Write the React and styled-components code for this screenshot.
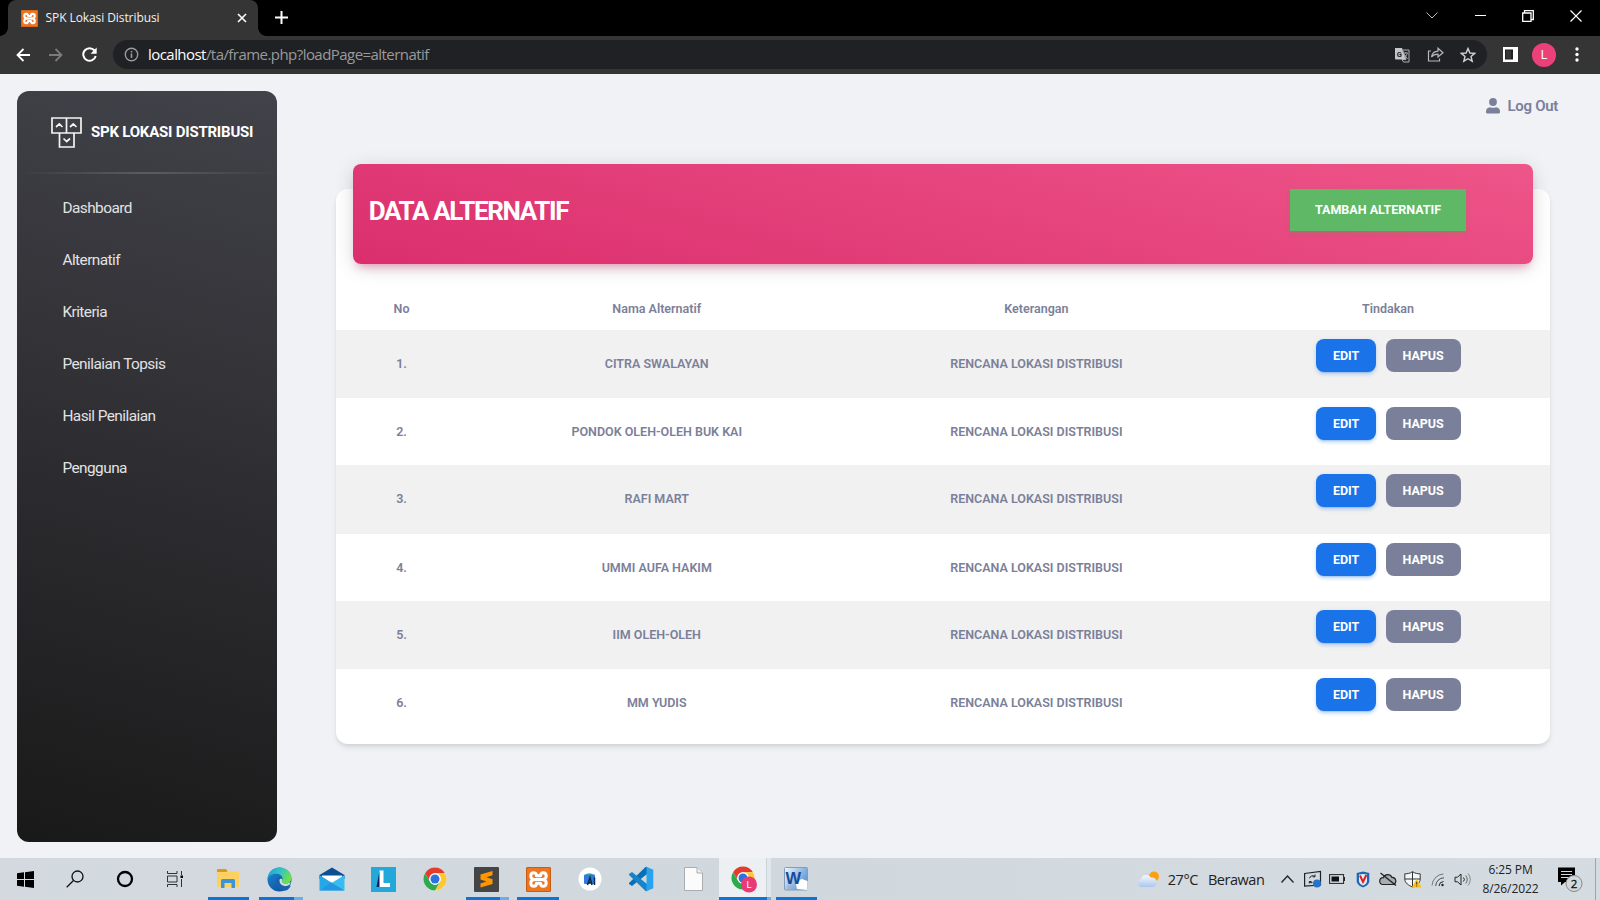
import React from "react";
import styled, { createGlobalStyle, css } from "styled-components";

const Global = createGlobalStyle`
  * { box-sizing: border-box; }
  html, body { margin: 0; padding: 0; }
  body { width: 1600px; height: 900px; overflow: hidden; font-family: Roboto, sans-serif; background: #f0f2f6; }
  svg { display: block; flex: none; }
`;

const ui = `"Open Sans", "Noto Sans", sans-serif`;

const Screen = styled.div`
  display: flex;
  flex-direction: column;
  width: 1600px;
  height: 900px;
`;

/* Browser chrome */
const TabStrip = styled.div`
  display: flex;
  height: 36px;
  background: #000;
`;
const Tab = styled.div`
  position: relative;
  display: flex;
  align-items: center;
  width: 250px;
  height: 36px;
  margin-left: 8px;
  padding: 0 11.5px 0 13px;
  border-radius: 8px 8px 0 0;
  background: #353535;
  &::before, &::after {
    content: "";
    position: absolute;
    bottom: 0;
    width: 8px;
    height: 8px;
  }
  &::before { left: -8px; background: radial-gradient(circle at 0 0, #000 7.5px, #353535 8px); }
  &::after { right: -8px; background: radial-gradient(circle at 100% 0, #000 7.5px, #353535 8px); }
`;
const TabTitle = styled.span`
  flex: 1;
  margin: -1px 0 0 7.5px;
  font: 12px/18px ${ui};
  letter-spacing: -0.08px;
  color: #f1f1f1;
  white-space: nowrap;
`;
const NewTab = styled.div`
  display: flex;
  align-items: center;
  margin: -1px 0 0 17px;
`;
const WindowControls = styled.div`
  display: flex;
  align-items: center;
  margin-left: auto;
  height: 31px;
`;
const WindowButton = styled.div`
  display: flex;
  justify-content: center;
  width: 48px;
`;
const Toolbar = styled.div`
  display: flex;
  align-items: center;
  height: 38px;
  padding: 0 10px 1px 6px;
  background: #353535;
`;
const NavButton = styled.div`
  display: flex;
  justify-content: center;
  width: 33.5px;
`;
const AddressBar = styled.div`
  display: flex;
  align-items: center;
  width: 1374px;
  height: 29px;
  margin-left: 6.5px;
  padding: 0 2px 0 11px;
  border-radius: 15px;
  background: #202124;
`;
const Url = styled.div`
  flex: 1;
  margin: -2px 0 0 9px;
  font: 15px/20px ${ui};
  letter-spacing: -0.55px;
  color: #9a9a9b;
  white-space: nowrap;
  b { font-weight: 400; color: #fff; }
`;
const AddressAction = styled.div`
  display: flex;
  justify-content: center;
  width: 33.3px;
`;
const PanelIcon = styled.svg`
  margin: 0 15px 0 16px;
`;
const Avatar = styled.div`
  display: flex;
  align-items: center;
  justify-content: center;
  width: 24px;
  height: 24px;
  margin: 0 13.5px 0 -1px;
  border-radius: 50%;
  background: #ec407a;
  color: #fff;
  font: 12px/24px Roboto, sans-serif;
`;

/* Page */
const Page = styled.main`
  display: flex;
  height: 784px;
  padding: 17px 0 16px 17px;
  background: #f0f2f6;
`;
const Sidebar = styled.aside`
  width: 260px;
  height: 751px;
  border-radius: 12px;
  background: linear-gradient(195deg, #42424a, #191919);
`;
const Brand = styled.div`
  display: flex;
  align-items: center;
  height: 81px;
  padding: 1px 0 0 34px;
`;
const BrandName = styled.span`
  margin: -1px 0 0 9px;
  color: #fff;
  font: 700 15px/20px Roboto, sans-serif;
  letter-spacing: -0.22px;
  white-space: nowrap;
`;
const Divider = styled.div`
  height: 2px;
  background: linear-gradient(90deg, transparent, rgba(255, 255, 255, 0.16), transparent);
`;
const Menu = styled.nav`
  display: flex;
  flex-direction: column;
  padding: 7.6px 0 0 45.4px;
`;
const MenuItem = styled.a`
  height: 52px;
  color: #e2e2e4;
  font: 400 15.4px/52px Roboto, sans-serif;
  letter-spacing: -0.55px;
  white-space: nowrap;
`;
const Content = styled.section`
  display: flex;
  flex-direction: column;
  width: 1214px;
  margin-left: 59px;
`;
const LogOut = styled.a`
  display: flex;
  align-items: center;
  align-self: flex-end;
  gap: 7px;
  height: 20px;
  margin: 5px -8px 73px 0;
  color: #7b809a;
  font: 600 15px/21px Roboto, sans-serif;
  letter-spacing: -0.3px;
`;
const Card = styled.div`
  height: 555px;
  border-radius: 12px;
  background: #fff;
  box-shadow: 0 4px 6px -1px rgba(0, 0, 0, 0.1), 0 2px 4px -1px rgba(0, 0, 0, 0.06);
`;
const CardHeader = styled.header`
  display: flex;
  align-items: flex-start;
  justify-content: space-between;
  height: 100px;
  margin: -25px 17px 0 16.6px;
  padding: 25px 67px 0 16.2px;
  border-radius: 8px;
  background: linear-gradient(195deg, #ee5589, #db2f6d);
  box-shadow: 0 4px 20px rgba(0, 0, 0, 0.14), 0 7px 10px -5px rgba(233, 30, 99, 0.4);
`;
const Title = styled.h1`
  margin: 0;
  color: #fff;
  font: 700 26px/44px Roboto, sans-serif;
  letter-spacing: -1.35px;
`;
const AddButton = styled.button`
  width: 176px;
  height: 42px;
  padding: 0;
  border: 0;
  background: #5fb865;
  box-shadow: 0 3px 3px rgba(76, 175, 80, 0.15), 0 3px 1px -2px rgba(76, 175, 80, 0.2), 0 1px 5px rgba(76, 175, 80, 0.15);
  color: #fff;
  font: 700 12.5px/42px Roboto, sans-serif;
  letter-spacing: 0;
`;
const Row = styled.div`
  display: grid;
  grid-template-columns: 131px 379.5px 379.7px 323.8px;
  height: ${(p) => (p.$striped ? 68.4 : 67)}px;
  background: ${(p) => (p.$striped ? "#f1f1f1" : "transparent")};
  color: #7b809a;
  font: 600 12.5px/68px Roboto, sans-serif;
  text-align: center;
`;
const HeadRow = styled(Row)`
  height: 66px;
  line-height: 90px;
`;
const Actions = styled.div`
  display: flex;
  justify-content: center;
  gap: 9.5px;
  padding: 9px 0 0 0.6px;
`;
const ActionButton = styled.button`
  height: 33px;
  width: ${(p) => (p.$kind === "edit" ? 60 : 75)}px;
  padding: 0;
  border: 0;
  border-radius: 8px;
  color: #fff;
  font: 700 12.5px/33px Roboto, sans-serif;
  background: #7b809a;
  ${(p) => p.$kind === "edit" && css`
    background: #1a73e8;
    box-shadow: 0 3px 3px rgba(26, 115, 232, 0.15), 0 3px 1px -2px rgba(26, 115, 232, 0.2), 0 1px 5px rgba(26, 115, 232, 0.15);
  `}
`;

/* Taskbar */
const Taskbar = styled.footer`
  display: flex;
  height: 42px;
  background: linear-gradient(90deg, #d3d9df, #d0d8de 50%, #d5dce1);
`;
const SystemButton = styled.div`
  display: flex;
  align-items: center;
  justify-content: center;
  width: 50px;
  height: 42px;
`;
const Apps = styled.div`
  display: flex;
  margin-left: 2.5px;
`;
const AppButton = styled.div`
  position: relative;
  display: flex;
  align-items: center;
  justify-content: center;
  width: 51.65px;
  height: 42px;
  background: ${(p) => (p.$active ? "linear-gradient(90deg, #edf0f3 47px, #cbd2d8 47px, #cbd2d8 48px, #e2e7eb 48px)" : "transparent")};
`;
const Running = styled.i`
  position: absolute;
  bottom: 0;
  left: ${(p) => (p.$wide ? 0 : 5)}px;
  right: ${(p) => (p.$wide ? 0 : p.$multi ? 3 : 5)}px;
  height: 3px;
  background: ${(p) => {
    if (p.$wide) return "linear-gradient(90deg, #0b74d8 48px, #69afe8 48px)";
    return p.$multi ? "linear-gradient(90deg, #0b74d8 80%, #69afe8 80%)" : "#0b74d8";
  }};
`;
const Weather = styled.div`
  display: flex;
  align-items: center;
  margin-left: auto;
  width: 138.5px;
  font: 14.5px/20px ${ui};
  letter-spacing: -0.45px;
  color: #222;
  span { margin: 1px 0 0 8px; }
  span + span { margin-left: 10px; }
`;
const TrayIcon = styled.div`
  display: flex;
  align-items: center;
  justify-content: center;
  width: 25.1px;
  height: 42px;
`;
const Clock = styled.div`
  width: 69px;
  padding-top: 2px;
  color: #222;
  font: 12px/19px ${ui};
  letter-spacing: -0.1px;
  text-align: center;
  white-space: nowrap;
`;
const Notice = styled.div`
  display: flex;
  align-items: center;
  width: 51px;
  height: 42px;
  padding-left: 12px;
  border-right: 1px solid #9ea4a9;
  margin-right: 4px;
`;

/* Icons */
const Xampp = ({ s }) => (
  <svg width={s} height={s} viewBox="0 0 24 24">
    <rect width="24" height="24" rx="1.5" fill="#ee7623" />
    <rect x="0.5" y="0.5" width="23" height="23" rx="1.2" fill="none" stroke="#c75d13" />
    <g fill="none" stroke="#fff" strokeWidth="2.9" strokeLinecap="round" strokeLinejoin="round">
      <path d="M9.300 12H14.700M9.300 12c-3 0-4.700-1.300-4.700-3.400 0-2 1.300-3.100 2.900-3.100C9.500 5.500 10 7 10 8.500h4c0-1.500.5-3 2.500-3 1.600 0 2.900 1.100 2.900 3.100 0 2.100-1.700 3.400-4.700 3.400" />
      <path d="M9.300 12c-3 0-4.700 1.300-4.700 3.400 0 2 1.300 3.100 2.900 3.100 2 0 2.500-1.500 2.500-3h4c0 1.500.5 3 2.500 3 1.600 0 2.900-1.100 2.900-3.100 0-2.100-1.700-3.400-4.700-3.400" />
    </g>
  </svg>
);
const ChromeLogo = ({ s = 24 }) => (
  <svg width={s} height={s} viewBox="0 0 24 24">
    <circle cx="12" cy="12" r="11.500" fill="#fff" />
    <path d="M2.040 6.250A11.500 11.500 0 0 1 21.960 6.250H12A5.750 5.750 0 0 0 7.020 14.870Z" fill="#e33b2e" />
    <path d="M21.960 6.250A11.500 11.500 0 0 1 12 23.500L16.980 14.870A5.750 5.750 0 0 0 12 6.250Z" fill="#fcc934" />
    <path d="M12 23.500A11.500 11.500 0 0 1 2.040 6.250L7.020 14.870A5.750 5.750 0 0 0 16.980 14.870Z" fill="#2da94f" />
    <circle cx="12" cy="12" r="5.700" fill="#fff" />
    <circle cx="12" cy="12" r="4.500" fill="#2d70e0" />
  </svg>
);
const Line = ({ w, h = w, c = "#fff", sw = 1, d }) => (
  <svg width={w} height={h} viewBox={`0 0 ${w} ${h}`} fill="none" stroke={c} strokeWidth={sw}>
    <path d={d} />
  </svg>
);

const taskApps = [
  { id: "explorer", run: true, icon: (
    <svg width="24" height="22" viewBox="0 0 24 22">
      <path d="M1 2a1 1 0 0 1 1-1h8l2 2.500H22a1 1 0 0 1 1 1V19H1Z" fill="#fdd160" />
      <path d="M1 4V2a1 1 0 0 1 1-1h8l1.500 2-1 1Z" fill="#dd9a14" />
      <path d="M5 20V12.500a1.500 1.500 0 0 1 1.500-1.500h11a1.500 1.500 0 0 1 1.500 1.500V20H15.500V15h-7v5Z" fill="#3d93d8" />
    </svg>) },
  { id: "edge", run: true, multi: true, icon: (
    <svg width="25" height="25" viewBox="0 0 25 25">
      <defs>
        <linearGradient id="eg" x1="0" y1="0" x2="1" y2="0.400"><stop offset="0" stopColor="#1e9fdf" /><stop offset="0.550" stopColor="#34c3c5" /><stop offset="1" stopColor="#6bdf4f" /></linearGradient>
        <linearGradient id="eb" x1="0" y1="0" x2="0.700" y2="1"><stop offset="0" stopColor="#1b8bd6" /><stop offset="1" stopColor="#12509c" /></linearGradient>
      </defs>
      <circle cx="12.500" cy="12.500" r="12" fill="url(#eb)" />
      <path d="M.6 12C1 5.500 6 .500 12.500.500S24.500 5.300 24.500 11c0 3.700-3 5.500-5.700 5.500-2.600 0-4.300-.9-4.300-2 0-.8 1-1.200 1-3 0-2.600-2.700-4.700-6.500-4.700C4.500 6.800 1.500 9.300.6 12Z" fill="url(#eg)" />
      <path d="M14.500 11.200c-1 .6-2.300 1.500-2.300 3.600 0 3 3 5.300 6.500 5.300 1.800 0 3.500-.6 4.500-1.300.4-.3.6 0 .4.400-1 1.700-2.600 3.300-4.300 4.200-5 .5-10.300-3-10.300-8.600 0-2.600 1.500-4.600 3.200-5.300 1.500 0 2.500.7 2.300 1.700Z" fill="#1763ad" />
      <path d="M12.800 12c1.500-1 3 .3 2.200 1.600-.9 1.500.7 3 3.700 3 2.100 0 3.900-.6 5-1.800-.2 2.800-2.200 4.400-5 4.400-4 0-7.200-3.400-5.900-7.200Z" fill="#d3d9df" />
    </svg>) },
  { id: "mail", icon: (
    <svg width="26" height="24" viewBox="0 0 26 24">
      <path d="M.5 8 13 .500 25.500 8V12H.500Z" fill="#0d4f93" />
      <path d="M3 8.500H23V17H3Z" fill="#fff" />
      <path d="M.5 8 13 16 .500 23.500Z" fill="#27a7e8" />
      <path d="M25.500 8V23.500H.500Z" fill="#38bdf3" />
      <path d="M25.500 23.500 12 15.300.500 23.500Z" fill="#2398de" />
    </svg>) },
  { id: "l", icon: (
    <svg width="25" height="25" viewBox="0 0 25 25">
      <rect width="25" height="25" fill="#22a9d9" />
      <path d="M8.500 4 5.500 20H11V16Z" fill="#0c1f5c" />
      <path d="M8.500 3.500H12.500V16H19V20H8.500Z" fill="#fff" />
    </svg>) },
  { id: "chrome", icon: <ChromeLogo /> },
  { id: "sublime", run: true, multi: true, icon: (
    <svg width="25" height="25" viewBox="0 0 25 25">
      <rect width="25" height="25" rx="1" fill="#454545" />
      <path d="M18.500 4V8.300L12.500 10.300 18.500 12.200V17L6.500 20.500V16.500L12.500 14.500 6.500 12.500V7.500Z" fill="#ff9800" />
    </svg>) },
  { id: "xampp", run: true, icon: <Xampp s={25} /> },
  { id: "studio", icon: (
    <svg width="24" height="24" viewBox="0 0 24 24">
      <circle cx="12" cy="12" r="11.500" fill="#fff" />
      <path d="M7 8.500a5 4 0 0 1 9 0Z" fill="#2fc46d" />
      <rect x="6" y="7.500" width="11" height="9.500" rx="1" fill="#3079e0" />
      <path d="M9.500 18 12 10.500 14 18M10.500 15.500H13.500M16.500 10.500V18" stroke="#0b2a4c" strokeWidth="1.500" fill="none" />
    </svg>) },
  { id: "code", icon: (
    <svg width="26" height="26" viewBox="0 0 26 26">
      <path d="M19 .7V8L4 20 1 18V17L17.500 1Z" fill="#0a6fb5" />
      <path d="M19 25.300V18L4 6 1 8V9L17.500 25Z" fill="#1783c9" />
      <path d="M18.500.7 25.300 3.800V22.200L18.500 25.300Z" fill="#2aa2ee" />
    </svg>) },
  { id: "file", icon: (
    <svg width="19" height="24" viewBox="0 0 19 24">
      <path d="M.5.500H13L18.500 6V23.500H.500Z" fill="#fbfbfb" stroke="#a9adb0" />
      <path d="M13 .500V6H18.500" fill="#eee" stroke="#a9adb0" />
    </svg>) },
  { id: "profile", run: true, wide: true, active: true, icon: (
    <svg width="27" height="27" viewBox="0 0 27 27">
      <ChromeLogo />
      <circle cx="18" cy="18.500" r="8" fill="#e83a76" />
      <text x="18" y="22" fontFamily="Roboto" fontSize="9.500" fill="#fff" textAnchor="middle">L</text>
    </svg>) },
  { id: "word", run: true, icon: (
    <svg width="24" height="24" viewBox="0 0 24 24">
      <defs><linearGradient id="wd" x1="0" y1="0" x2="1" y2="0.600"><stop offset="0" stopColor="#f2f7fc" /><stop offset="1" stopColor="#5d94d2" /></linearGradient></defs>
      <rect x="0.500" y="0.500" width="23" height="22.500" rx="1" fill="url(#wd)" stroke="#7f9dbf" />
      <path d="M3 19h10M3 21h9" stroke="#8faacb" strokeWidth=".8" />
      <path d="M12 17C15 17 15 12 18 12L23.500 14V23L13 22Z" fill="#fff" />
      <text x="9.300" y="16.500" fontFamily="Liberation Sans" fontWeight="700" fontSize="16.500" fill="#154b9c" textAnchor="middle">W</text>
    </svg>) },
];

const tray = [
  <Line w={13} h={8} c="#222" sw={1.300} d="M.5 7.500 6.500 1 12.500 7.500" />,
  <svg width="18" height="18" viewBox="0 0 18 18" fill="none" stroke="#222"><path d="M.6 3.500 16.500 1.500V15L.6 16Z" strokeWidth="1.200" /><path d="M11 6.500a3.500 3.500 0 0 0-5.500 1.800M11 4.500V6.800H8.700M5.500 12a3 3 0 0 0 3 .6M5.300 13.500V11.500H7.500" /><circle cx="13" cy="13.500" r="4" fill="#2674c8" stroke="none" /></svg>,
  <svg width="17" height="10" viewBox="0 0 17 10"><rect x=".6" y=".6" width="14" height="8.800" fill="none" stroke="#222" /><rect x="2.500" y="2.500" width="7.500" height="5" fill="#111" /><path d="M15.500 3V7" stroke="#222" /></svg>,
  <svg width="14" height="17" viewBox="0 0 14 17"><path d="M7 .5 13.300 2V10C13.300 13.500 9.500 15.500 7 16.500 4.500 15.500.7 13.500.7 10V2Z" fill="#1f68b4" /><path d="M7 3 11 3.500V10c0 2-2 3.500-4 4.500-2-1-4-2.500-4-4.500V3.500Z" fill="#e9edf2" /><path d="M4 4.500 7 11 10.300 4" fill="none" stroke="#d92027" strokeWidth="2" /></svg>,
  <svg width="18" height="14" viewBox="0 0 18 14"><path d="M4 12.500a3.400 3.400 0 0 1 .3-6.800A4.700 4.700 0 0 1 13 5.400a3.600 3.600 0 0 1 1 7.100Z" fill="#a8adb0" stroke="#222" strokeWidth="1.200" /><path d="M1.500 1 17 13.500" stroke="#222" strokeWidth="1.300" /></svg>,
  <svg width="18" height="17" viewBox="0 0 18 17"><path d="M8.500.6C6 2.500 3.500 2.800.8 2.800V8c0 4 4 6.500 7.700 8 3.700-1.500 7.700-4 7.700-8V2.800C13.500 2.800 11 2.500 8.500.6Z" fill="#f5f6f7" stroke="#333" /><path d="M8.500 1V16M1 8H16" stroke="#333" /><path d="M12.700 8 17.700 16.500H7.700Z" fill="#fcbf10" /><path d="M12.700 10.800V13.500M12.700 14.500v1" stroke="#333" /></svg>,
  <svg width="15" height="15" viewBox="0 0 15 15" fill="none" stroke="#222"><circle cx="11.500" cy="13" r="1.200" fill="#222" stroke="none" /><path d="M8 14A5 5 0 0 1 12.500 9.500" /><path d="M4.700 14A8.300 8.300 0 0 1 13 5.800" strokeOpacity=".75" /><path d="M1 13.500A12 12 0 0 1 12.500 2" strokeOpacity=".55" /></svg>,
  <svg width="18" height="15" viewBox="0 0 18 15" fill="none" stroke="#222"><path d="M1 5.200H3.500L7 2V13L3.500 9.800H1Z" /><path d="M9.500 5.500a3 3 0 0 1 0 4" /><path d="M11.700 3.500a6 6 0 0 1 0 8" strokeOpacity=".65" /><path d="M14 1.500a9 9 0 0 1 0 12" strokeOpacity=".45" /></svg>,
];

const menu = ["Dashboard", "Alternatif", "Kriteria", "Penilaian Topsis", "Hasil Penilaian", "Pengguna"];
const rows = ["CITRA SWALAYAN", "PONDOK OLEH-OLEH BUK KAI", "RAFI MART", "UMMI AUFA HAKIM", "IIM OLEH-OLEH", "MM YUDIS"];

export default function App() {
  return (
    <Screen>
      <Global />
      <TabStrip>
        <Tab>
          <Xampp s={17} />
          <TabTitle>SPK Lokasi Distribusi</TabTitle>
          <Line w={10} sw={1.600} d="M1 1 9 9M9 1 1 9" />
        </Tab>
        <NewTab><Line w={13} sw={2} d="M6.500 0V13M0 6.500H13" /></NewTab>
        <WindowControls>
          <WindowButton><Line w={12} h={7} c="#bbb" d="M.5.500 6 6 11.500.500" /></WindowButton>
          <WindowButton><Line w={11} h={1} sw={2} d="M0 .5H11" /></WindowButton>
          <WindowButton><Line w={12} sw={1.300} d="M.7 3H9V11.300H.7ZM2.500 3V.7H11.300V9.500H9" /></WindowButton>
          <WindowButton><Line w={12} sw={1.200} d="M.5.500 11.500 11.500M11.500.500.500 11.500" /></WindowButton>
        </WindowControls>
      </TabStrip>
      <Toolbar>
        <NavButton><Line w={14} sw={1.800} d="M14 7H1.500M7.500 1 1.500 7 7.500 13" /></NavButton>
        <NavButton><Line w={14} sw={1.800} c="#7b7b7b" d="M0 7H12.500M6.500 1 12.500 7 6.500 13" /></NavButton>
        <NavButton>
          <svg width="15" height="15" viewBox="0 0 15 15"><path d="M12.500 3.500A6.300 6.300 0 1 0 13.700 9" fill="none" stroke="#fff" strokeWidth="2" /><path d="M14.700.500V6.700H8.500Z" fill="#fff" /></svg>
        </NavButton>
        <AddressBar>
          <svg width="15" height="15" viewBox="0 0 15 15" stroke="#9a9b9d" fill="none"><circle cx="7.500" cy="7.500" r="6.200" strokeWidth="1.400" /><path d="M7.500 6.500V11M7.500 4V5.500" strokeWidth="1.600" /></svg>
          <Url><b>localhost</b>/ta/frame.php?loadPage=alternatif</Url>
          <AddressAction>
            <svg width="16" height="16" viewBox="0 0 16 16"><path d="M1 1H8L12 12.500H2A1 1 0 0 1 1 11.500Z" fill="#c5c6c7" /><path d="M8.500 3H15V15H9.500L8 12.500H12Z" fill="#202124" stroke="#aeb0b2" /><text x="5.300" y="9.500" fontFamily="Roboto" fontWeight="700" fontSize="7.500" fill="#202124" textAnchor="middle">G</text><path d="M9.500 6H14M11.800 5V6.500M13.500 6.500 10.500 11M10.500 7.500 13.500 12" stroke="#aeb0b2" strokeWidth=".9" /></svg>
          </AddressAction>
          <AddressAction><Line w={17} h={15} c="#b8b9bb" sw={1.200} d="M4 4H1.500V14H12.500V11.500M4.500 10C5 6.500 7 4.500 11 4.200V1.200L16 5.700 11 10V7.200C8 7.200 6 8 4.500 10Z" /></AddressAction>
          <AddressAction><Line w={16} c="#d0d1d2" sw={1.400} d="M8 1.500 9.900 6 14.700 6.400 11 9.500 12.200 14.200 8 11.700 3.800 14.200 5 9.500 1.300 6.400 6.100 6Z" /></AddressAction>
        </AddressBar>
        <PanelIcon width="15" height="15" viewBox="0 0 15 15"><rect width="15" height="15" fill="#fff" /><rect x="2" y="2.500" width="8" height="10" fill="#202124" /><rect x="3" y="3.500" width="5" height="8" fill="#353535" /></PanelIcon>
        <Avatar>L</Avatar>
        <svg width="14" height="15" viewBox="0 0 14 15" fill="#fff"><circle cx="7" cy="2" r="1.700" /><circle cx="7" cy="7.500" r="1.700" /><circle cx="7" cy="13" r="1.700" /></svg>
      </Toolbar>

      <Page>
        <Sidebar>
          <Brand>
            <Line w={31} c="#f4f4f4" sw={1.700} d="M1 1H30V16H1ZM15.500 1V16M8.500 16V30H23V16M5 10 8.300 7 11.500 10M19 10 22.300 7 25.500 10M12.500 21.500 15.700 24.500 19 21.500" />
            <BrandName>SPK LOKASI DISTRIBUSI</BrandName>
          </Brand>
          <Divider />
          <Menu>{menu.map((m) => <MenuItem key={m}>{m}</MenuItem>)}</Menu>
        </Sidebar>
        <Content>
          <LogOut>
            <svg width="14" height="16" viewBox="0 0 14 16" fill="#7b809a"><circle cx="7" cy="4" r="3.900" /><path d="M0 16V13.500A4.500 4.500 0 0 1 4 9.200Q7 10.500 10 9.200A4.500 4.500 0 0 1 14 13.500V14.500Q14 15.500 12.500 15.500H1.500Q0 15.500 0 14.500Z" /></svg>
            <span>Log Out</span>
          </LogOut>
          <Card>
            <CardHeader>
              <Title>DATA ALTERNATIF</Title>
              <AddButton>TAMBAH ALTERNATIF</AddButton>
            </CardHeader>
            <HeadRow><span>No</span><span>Nama Alternatif</span><span>Keterangan</span><span>Tindakan</span></HeadRow>
            {rows.map((name, i) => (
              <Row key={name} $striped={i % 2 === 0}>
                <span>{`${i + 1}.`}</span>
                <span>{name}</span>
                <span>RENCANA LOKASI DISTRIBUSI</span>
                <Actions>
                  <ActionButton $kind="edit">EDIT</ActionButton>
                  <ActionButton>HAPUS</ActionButton>
                </Actions>
              </Row>
            ))}
          </Card>
        </Content>
      </Page>

      <Taskbar>
        <SystemButton><svg width="17" height="17" viewBox="0 0 17 17" fill="#000"><path d="M0 2.300 7 1.300V8H0ZM8 1.200 17 0V8H8ZM0 9H7V15.700L0 14.700ZM8 9H17V17L8 15.800Z" /></svg></SystemButton>
        <SystemButton><svg width="18" height="18" viewBox="0 0 18 18" fill="none" stroke="#111" strokeWidth="1.300"><circle cx="11.500" cy="6.500" r="5.500" /><path d="M7.500 10.500.7 17.300" /></svg></SystemButton>
        <SystemButton><svg width="18" height="18" viewBox="0 0 18 18"><circle cx="9" cy="9" r="7" fill="none" stroke="#000" strokeWidth="2.300" /></svg></SystemButton>
        <SystemButton><svg width="18" height="16" viewBox="0 0 18 16" fill="none" stroke="#333"><path d="M1.500 0V2.500H11V0M1.500 5H11V11H1.500ZM1.500 16V13.500H11V16M15.500 0V4M15.500 8V16" /><rect x="14.500" y="4.500" width="2.500" height="2.500" fill="#000" stroke="none" /></svg></SystemButton>
        <Apps>
          {taskApps.map((a) => (
            <AppButton key={a.id} $active={a.active}>
              {a.icon}
              {a.run && <Running $multi={a.multi} $wide={a.wide} />}
            </AppButton>
          ))}
        </Apps>
        <Weather>
          <svg width="23" height="17" viewBox="0 0 23 17"><defs><linearGradient id="cl" x1="0" y1="0" x2="0" y2="1"><stop offset="0" stopColor="#f7faff" /><stop offset="1" stopColor="#a9c6ee" /></linearGradient></defs><circle cx="17" cy="5.500" r="5" fill="#fba015" /><path d="M4.500 16A4 4 0 0 1 4 8.200 5.500 5.500 0 0 1 14 6.500a4.800 4.800 0 0 1 2 9.500Z" fill="url(#cl)" /></svg>
          <span>27°C</span><span>Berawan</span>
        </Weather>
        {tray.map((t, i) => <TrayIcon key={i}>{t}</TrayIcon>)}
        <Clock>6:25 PM<br />8/26/2022</Clock>
        <Notice>
          <svg width="28" height="28" viewBox="0 0 28 28"><path d="M1 2.500H18V17H8L4 20.500V17H1Z" fill="#000" /><path d="M4 6.500H15M4 9.500H15M4 12.500H15" stroke="#d5dce1" /><circle cx="17" cy="18.500" r="8" fill="#d3d8dc" stroke="#888" /><text x="17" y="22.800" fontFamily="Open Sans" fontSize="11.500" fill="#111" stroke="#111" strokeWidth=".3" textAnchor="middle">2</text></svg>
        </Notice>
      </Taskbar>
    </Screen>
  );
}
